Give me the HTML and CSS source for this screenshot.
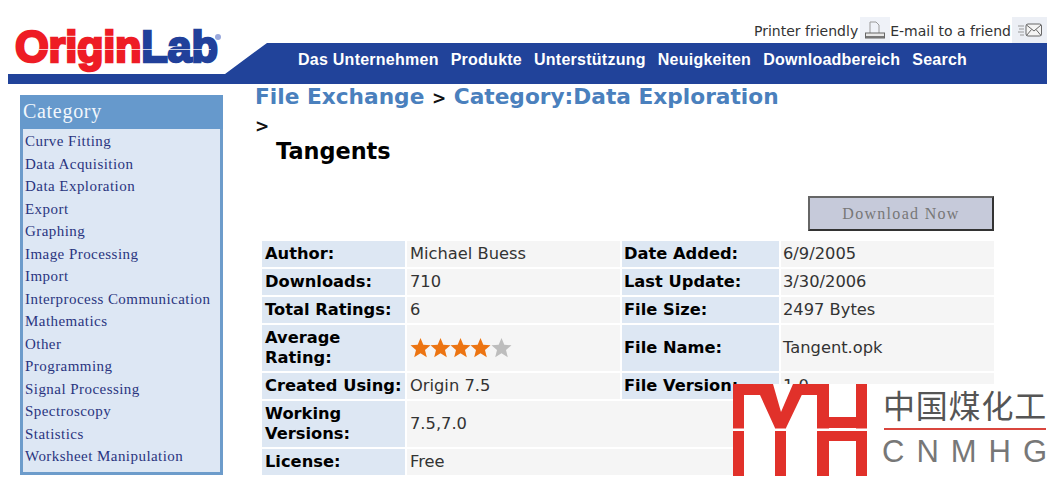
FILE: index.html
```html
<!DOCTYPE html>
<html lang="en">
<head>
<meta charset="utf-8">
<title>Tangents - File Exchange</title>
<link rel="stylesheet" href="styles.css">
</head>
<body>
<header class="header">
  <div class="logo"><span class="logo-o">Origin</span><span class="logo-l">Lab</span><i class="logo-line"></i><i class="logo-dot"></i></div>
  <div class="tools">
    <span>Printer friendly</span>
    <span class="tool-icon print">
      <svg width="22" height="20" viewBox="0 0 22 20"><path d="M6 13V2h6l3 3v8" fill="none" stroke="#9a9a9a"/><rect x="1.500" y="13" width="19" height="5" fill="#e8e8e8" stroke="#666"/><rect x="2" y="16" width="18" height="2" fill="#777"/></svg>
    </span>
    <span>E-mail to a friend</span>
    <span class="tool-icon mail">
      <svg width="26" height="16" viewBox="0 0 26 16"><path d="M1 4h6M2 7h5M1 10h6M3 13h4" stroke="#999" stroke-width="1"/><rect x="9" y="2" width="15.500" height="12" rx="2" fill="#f4f4f4" stroke="#666"/><path d="M9.500 3l7.500 6 7-6M9.500 13.500l5-6M24 13.500l-5-6" fill="none" stroke="#666"/></svg>
    </span>
  </div>
  <nav class="nav">
    <a>Das Unternehmen</a><a>Produkte</a><a>Unterstützung</a><a>Neuigkeiten</a><a>Downloadbereich</a><a>Search</a>
  </nav>
</header>
<div class="page">
  <aside class="sidebar">
    <h2 class="side-title">Category</h2>
    <ul class="side-list">
      <li>Curve Fitting</li>
      <li>Data Acquisition</li>
      <li>Data Exploration</li>
      <li>Export</li>
      <li>Graphing</li>
      <li>Image Processing</li>
      <li>Import</li>
      <li>Interprocess Communication</li>
      <li>Mathematics</li>
      <li>Other</li>
      <li>Programming</li>
      <li>Signal Processing</li>
      <li>Spectroscopy</li>
      <li>Statistics</li>
      <li>Worksheet Manipulation</li>
    </ul>
  </aside>
  <main class="content">
    <div class="crumbs"><a>File Exchange</a> <span class="sep">&gt;</span> <a>Category:Data Exploration</a></div>
    <div class="sep sep-line">&gt;</div>
    <h1 class="title">Tangents</h1>
    <div class="actions"><button class="download" type="button">Download Now</button></div>
    <table class="info">
      <tr class="r26"><th>Author:</th><td>Michael Buess</td><th>Date Added:</th><td>6/9/2005</td></tr>
      <tr class="r26"><th>Downloads:</th><td>710</td><th>Last Update:</th><td>3/30/2006</td></tr>
      <tr class="r26"><th>Total Ratings:</th><td>6</td><th>File Size:</th><td>2497 Bytes</td></tr>
      <tr class="r46"><th>Average Rating:</th><td>
        <svg class="stars" width="104" height="22" viewBox="0 0 104 22">
          <defs><polygon id="star" points="10.500,1 13.300,7.800 20.500,8.300 15,13 16.800,20.200 10.500,16.300 4.200,20.200 6,13 .5,8.300 7.700,7.800"/></defs>
          <use href="#star" fill="#ec7412"/><use href="#star" x="20" fill="#ec7412"/><use href="#star" x="40" fill="#ec7412"/><use href="#star" x="60" fill="#ec7412"/><use href="#star" x="81" fill="#bdbdbd"/>
        </svg></td><th>File Name:</th><td>Tangent.opk</td></tr>
      <tr class="r26"><th>Created Using:</th><td>Origin 7.5</td><th>File Version:</th><td>1.0</td></tr>
      <tr class="r46"><th>Working Versions:</th><td colspan="3">7.5,7.0</td></tr>
      <tr class="r26"><th>License:</th><td colspan="3">Free</td></tr>
    </table>
  </main>
</div>
<div class="stamp">
  <svg class="stamp-mark" width="134" height="92" viewBox="0 0 134 92">
    <g fill="#e1312a">
      <rect width="11" height="92"/><rect width="28" height="11"/><rect x="68" width="28" height="11"/>
      <polygon points="22,0 40,0 48,28 60,0 74,0 53,44 53,92 42,92 42,44"/>
      <rect x="84" width="12" height="92"/><rect x="123" width="11" height="92"/><rect x="84" y="33" width="50" height="11"/><rect x="84" y="47" width="50" height="10"/>
    </g>
    <rect y="44.500" width="134" height="2.500" fill="#fff"/>
  </svg>
  <div class="stamp-text">
    <div class="stamp-cn">中国煤化工</div>
    <div class="stamp-rule"></div>
    <div class="stamp-en"><span class="stamp-spaced">CNMH</span>G</div>
  </div>
</div>
</body>
</html>
```

FILE: styles.css
```css
html { height: 481px; overflow: hidden; }
body { margin: 0 6px 0 8px; background: #fff; color: #222; font-family: "DejaVu Sans", Verdana, sans-serif; position: relative; }

.header { position: relative; height: 84px; }
.logo { position: absolute; left: 7px; top: 21px; font: bold 43.500px/52px "Liberation Sans", Arial, sans-serif; letter-spacing: -.3px; white-space: nowrap; z-index: 1; }
.logo-o { color: #ee1c25; -webkit-text-stroke: 2.400px #ee1c25; }
.logo-l { color: #21409a; -webkit-text-stroke: 2.400px #21409a; }
.logo-line { position: absolute; left: 24px; top: 28px; width: 172px; height: 1px; background: #fff; opacity: .75; }
.logo-dot { position: absolute; left: 200px; top: 13px; width: 6px; height: 6px; border-radius: 50%; background: #9aa9dc; }

.tools { height: 43px; display: flex; justify-content: flex-end; align-items: flex-start; font-size: 14px; line-height: 14px; color: #333; }
.tools > span:not(.tool-icon) { margin-top: 24px; }
.tool-icon { display: flex; align-items: center; justify-content: center; height: 26px; margin-top: 17px; background: #eff2f8; }
.tool-icon.print { width: 30px; margin-left: 2px; }
.tool-icon.mail { width: 35px; margin-left: 1px; background: #eceff5; }

.nav { height: 41px; box-sizing: border-box; display: flex; gap: 12px; padding: 7px 0 0 290px; background: #21439a; clip-path: polygon(0 31px, 217px 31px, 259px 0, 100% 0, 100% 100%, 0 100%); color: #fff; font: bold 16px/20px "Liberation Sans", Arial, sans-serif; letter-spacing: .25px; white-space: nowrap; }

.page { display: flex; align-items: flex-start; padding: 0 0 0 12px; }
.sidebar { width: 203px; height: 380px; box-sizing: border-box; margin-top: 11px; background: #dde7f4; border: 3px solid #6d9ccb; border-top: 0; flex: none; }
.side-title { margin: 0 -3px; height: 34px; padding-left: 3px; background: #6699cc; color: #f2f7fc; font: normal 20px/33px "Liberation Serif", serif; letter-spacing: .7px; }
.side-list { list-style: none; margin: 0; padding: 1px 0 0 2px; font: 15px/22.500px "Liberation Serif", serif; letter-spacing: .45px; color: #2a3580; white-space: nowrap; }

.content { width: 739px; margin-left: 32px; flex: none; }
.crumbs { font-size: 21.700px; font-weight: bold; line-height: 26px; color: #4a80bd; white-space: nowrap; }
.sep { color: #111; font-size: 17px; }
.sep-line { font-weight: bold; line-height: 20px; margin-top: 5px; }
.title { margin: 1px 0 0 21px; font-size: 22.400px; line-height: 28px; color: #000; font-weight: bold; }
.actions { display: flex; justify-content: flex-end; margin-top: 31px; }
.download { width: 186px; height: 35px; box-sizing: border-box; background: #c6cada; border: 2px solid; border-color: #666 #333 #333 #666; color: #777; font: 16px/20px "Liberation Serif", serif; letter-spacing: 1.300px; padding: 0; }
.info { border-spacing: 2px; margin: 8px 0 0 5px; width: 736px; border-collapse: separate; table-layout: fixed; font-size: 16.300px; line-height: 20px; }
.info th { width: 143px; text-align: left; background: #dde7f3; padding: 0 0 0 3px; box-sizing: border-box; color: #000; font-weight: bold; }
.info th:nth-child(3) { width: 157px; padding-left: 2px; }
.info td { background: #f5f5f5; padding: 0 0 0 3px; color: #333; }
.info td:nth-child(4) { padding-left: 2px; }
.r26 th, .r26 td { height: 26px; }
.r46 th, .r46 td { height: 46px; }
.stars { display: block; }

.stamp { position: absolute; left: 725px; top: 384px; width: 320px; height: 97px; background: #fff; display: flex; z-index: 2; }
.stamp-mark { display: block; flex: none; }
.stamp-text { margin-left: 17px; width: 169px; flex: none; }
.stamp-cn { font: 32px/38px "Noto Sans CJK SC", sans-serif; color: #555; letter-spacing: .8px; white-space: nowrap; margin: 1px 0 0 -1px; }
.stamp-rule { height: 2px; background: #d9463e; margin-top: 5px; width: 162px; }
.stamp-en { font: 31px/36px "Liberation Sans", Arial, sans-serif; color: #777; white-space: nowrap; margin: 4px 0 0 -2px; }
.stamp-spaced { letter-spacing: 12px; }
```
